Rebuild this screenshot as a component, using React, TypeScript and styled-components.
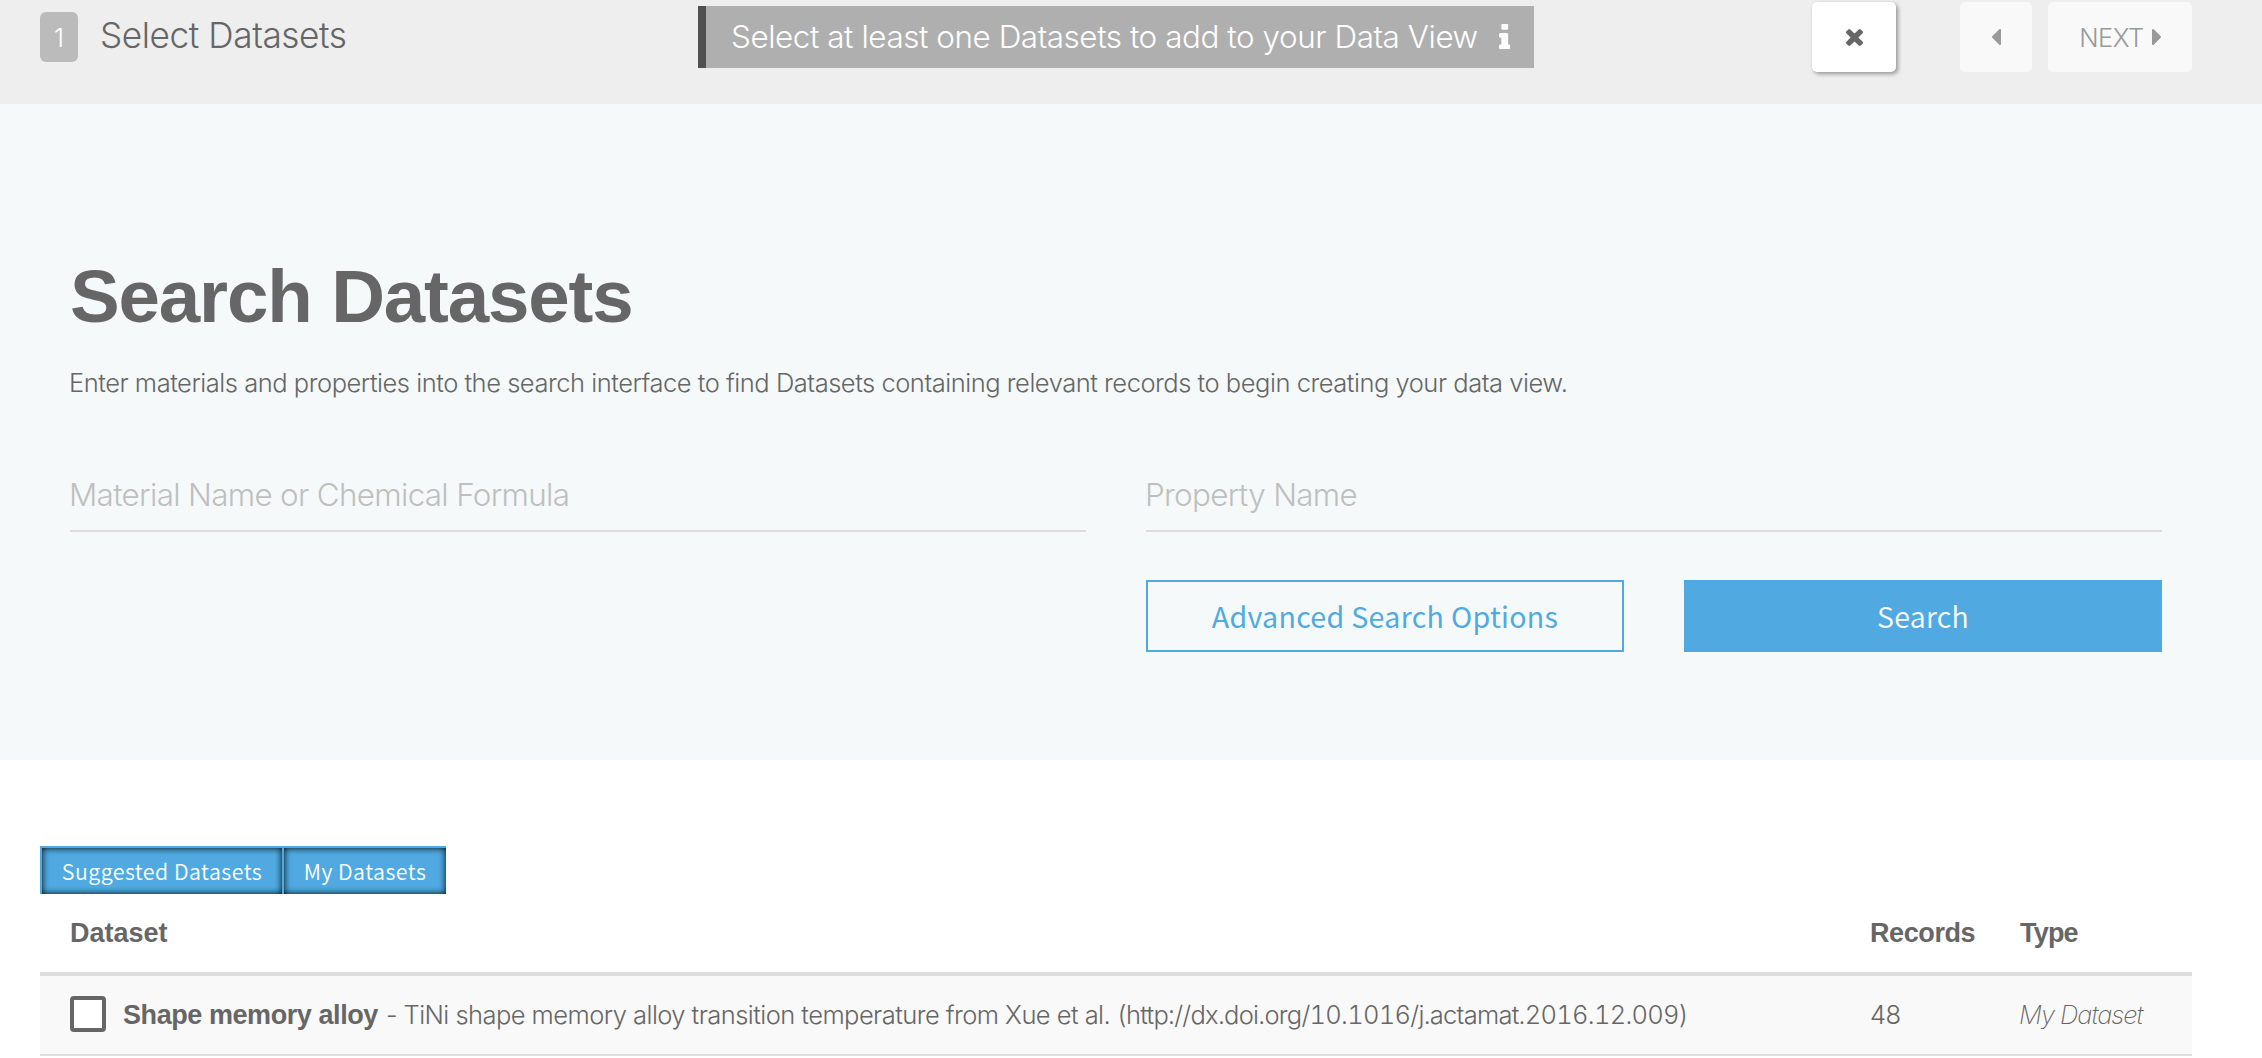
import React, { useState } from "react";
import styled, { createGlobalStyle } from "styled-components";

const light = `Inter, "Liberation Sans", sans-serif`;
const bold = `"Liberation Sans", Arial, sans-serif`;
const ui = `"Noto Sans CJK SC", "Noto Sans", sans-serif`;
const blue = "#50aae1";
const ink = "#666";
const rule = "#ddd";

const GlobalStyle = createGlobalStyle`
  *, *::before, *::after { box-sizing: border-box; }
  body {
    margin: 0;
    background: #fff;
    color: ${ink};
    font-family: ${light};
    font-weight: 300;
  }
  button, input { font: inherit; color: inherit; margin: 0; }
`;

const Page = styled.div`
  min-height: 1058px;
  background: #fff;
`;

const TopBar = styled.header`
  display: grid;
  grid-template-columns: 658px 836px 1fr;
  align-items: start;
  height: 104px;
  padding: 0 70px 0 40px;
  background: #eee;
`;

const Step = styled.div`
  display: flex;
  align-items: flex-start;
  gap: 22px;
`;

const StepNumber = styled.span`
  display: flex;
  align-items: center;
  justify-content: center;
  width: 38px;
  height: 50px;
  margin-top: 12px;
  border-radius: 6px;
  background: #bbb;
  color: #fff;
  font-size: 25.5px;
`;

const StepTitle = styled.span`
  font-size: 35.2px;
  line-height: 70px;
  letter-spacing: -0.42px;
  white-space: nowrap;
`;

const Notice = styled.div`
  display: flex;
  align-items: center;
  justify-content: space-between;
  height: 62px;
  margin-top: 6px;
  padding: 0 24px 0 25px;
  border-left: 8px solid #505050;
  background: #afafaf;
  color: #fff;
  font-size: 31.4px;
  line-height: 60px;
  letter-spacing: -0.43px;
  white-space: nowrap;

  svg {
    margin-bottom: 2px;
  }
`;

const Actions = styled.div`
  display: flex;
  justify-content: flex-end;
  gap: 16px;
  padding-top: 2px;
`;

const NavButton = styled.button<{ $width: number; $raised?: boolean }>`
  display: flex;
  align-items: center;
  justify-content: center;
  gap: 8px;
  width: ${(p) => p.$width}px;
  height: 70px;
  margin-right: ${(p) => (p.$raised ? 48 : 0)}px;
  padding: 0;
  border: 0;
  border-radius: 5px;
  background: ${(p) => (p.$raised ? "#fff" : "#f9f9f9")};
  box-shadow: ${(p) => (p.$raised ? "2px 2px 4px rgba(0, 0, 0, 0.38)" : "none")};
  color: ${(p) => (p.$raised ? ink : "#999")};
  font-size: 25.5px;
  letter-spacing: -0.5px;
`;

const Hero = styled.section`
  height: 656px;
  padding: 151px 100px 0 70px;
  background: #f5f9fa;
`;

const Heading = styled.h1`
  margin: 0 0 24px;
  font-family: ${bold};
  font-size: 74.5px;
  font-weight: 700;
  line-height: 84px;
  letter-spacing: -1.15px;
`;

const Lead = styled.p`
  margin: 0 0 56px -1px;
  font-size: 25.5px;
  line-height: 40px;
  letter-spacing: -0.474px;
  white-space: nowrap;
`;

const Form = styled.form`
  display: grid;
  grid-template-columns: 1fr 1fr;
  column-gap: 60px;
  row-gap: 48px;
`;

const Field = styled.input`
  width: 100%;
  height: 73px;
  padding: 0;
  border: 0;
  border-bottom: 2px solid ${rule};
  border-radius: 0;
  outline: 0;
  background: transparent;
  font-size: 31.4px;
  letter-spacing: -0.68px;
  text-indent: -1px;

  &::placeholder {
    color: #bfbfbf;
    opacity: 1;
  }
`;

const Buttons = styled.div`
  grid-column: 2;
  display: grid;
  grid-template-columns: 1fr 1fr;
  gap: 60px;
`;

const FormButton = styled.button<{ $solid?: boolean }>`
  height: 72px;
  padding: 0;
  border: 2px solid ${blue};
  background: ${(p) => (p.$solid ? blue : "transparent")};
  color: ${(p) => (p.$solid ? "#fff" : blue)};
  font-family: ${ui};
  font-size: 28.6px;
  font-weight: ${(p) => (p.$solid ? 350 : 400)};
  line-height: 66px;
  letter-spacing: 0.3px;
`;

const Results = styled.section`
  padding: 86px 70px 0 40px;
`;

const Tabs = styled.div`
  display: flex;
`;

const Tab = styled.button<{ $width: number }>`
  width: ${(p) => p.$width}px;
  height: 48px;
  padding: 0;
  border: 0 solid ${blue};
  border-width: 2px 0 0 2px;
  background: ${blue};
  box-shadow: inset 0 0 7px #000;
  color: #fff;
  font-family: ${ui};
  font-size: 21.4px;
  font-weight: 350;
  line-height: 46px;
  letter-spacing: 0.46px;
  white-space: nowrap;
`;

const Row = styled.div<{ $head?: boolean }>`
  display: grid;
  grid-template-columns: 1fr 150px 172px;
  align-items: center;
  height: ${(p) => (p.$head ? 82 : 80)}px;
  padding-left: 30px;
  border-bottom: ${(p) => (p.$head ? 4 : 2)}px solid ${rule};
  background: ${(p) => (p.$head ? "#fff" : "#f9f9f9")};
`;

const HeadCell = styled.div<{ $tracking?: number }>`
  font-family: ${bold};
  font-size: 27px;
  font-weight: 700;
  letter-spacing: ${(p) => p.$tracking ?? 0}px;
`;

const Cell = styled.div`
  display: flex;
  align-items: center;
  font-size: 25.5px;
  line-height: 40px;
  letter-spacing: -0.55px;
  white-space: pre;
`;

const Source = styled.span`
  font-variant-numeric: tabular-nums;
  letter-spacing: -0.73px;
`;

const Kind = styled.em`
  margin-left: -1px;
  font-weight: 200;
  letter-spacing: -1px;
`;

const Check = styled.input`
  appearance: none;
  width: 36px;
  height: 36px;
  margin: 0 17px 2px 0;
  border: 4px solid ${ink};
  border-radius: 4px;
  background: #fff;
`;

const Name = styled.strong`
  margin-right: 8px;
  font-family: ${bold};
  font-size: 27px;
  font-weight: 700;
  letter-spacing: -0.43px;
`;

const InfoIcon = () => (
  <svg width="11.5" height="25" viewBox="576 128 640 1408" fill="currentColor">
    <path d="M1216 1344v128q0 26-19 45t-45 19h-512q-26 0-45-19t-19-45v-128q0-26 19-45t45-19h64v-384h-64q-26 0-45-19t-19-45v-128q0-26 19-45t45-19h384q26 0 45 19t19 45v576h64q26 0 45 19t19 45zm-128-1152v192q0 26-19 45t-45 19h-256q-26 0-45-19t-19-45v-192q0-26 19-45t45-19h256q26 0 45 19t19 45z" />
  </svg>
);

const CloseIcon = () => (
  <svg width="17" height="17" viewBox="302 366 1188 1188" fill="currentColor">
    <path d="M1490 1322q0 40-28 68l-136 136q-28 28-68 28t-68-28l-294-294-294 294q-28 28-68 28t-68-28l-136-136q-28-28-28-68t28-68l294-294-294-294q-28-28-28-68t28-68l136-136q28-28 68-28t68 28l294 294 294-294q28-28 68-28t68 28l136 136q28 28 28 68t-28 68l-294 294 294 294q28 28 28 68z" />
  </svg>
);

const CaretLeft = () => (
  <svg width="9" height="16" viewBox="640 384 576 1024" fill="currentColor">
    <path d="M1216 448v896q0 26-19 45t-45 19-45-19l-448-448q-19-19-19-45t19-45l448-448q19-19 45-19t45 19 19 45z" />
  </svg>
);

const CaretRight = () => (
  <svg width="9" height="16" viewBox="576 384 576 1024" fill="currentColor">
    <path d="M1152 896q0 26-19 45l-448 448q-19 19-45 19t-45-19-19-45v-896q0-26 19-45t45-19 45 19l448 448q19 19 19 45z" />
  </svg>
);

const datasets = [
  {
    name: "Shape memory alloy",
    description: "TiNi shape memory alloy transition temperature from Xue et al.",
    source: "http://dx.doi.org/10.1016/j.actamat.2016.12.009",
    records: 48,
    kind: "My Dataset",
  },
];

export default function App() {
  const [selected, setSelected] = useState<string[]>([]);
  const toggle = (name: string) =>
    setSelected((s) => (s.includes(name) ? s.filter((n) => n !== name) : [...s, name]));

  return (
    <Page>
      <GlobalStyle />
      <TopBar>
        <Step>
          <StepNumber>1</StepNumber>
          <StepTitle>Select Datasets</StepTitle>
        </Step>
        <Notice>
          <span>Select at least one Datasets to add to your Data View</span>
          <InfoIcon />
        </Notice>
        <Actions>
          <NavButton $width={84} $raised aria-label="Close">
            <CloseIcon />
          </NavButton>
          <NavButton $width={72} aria-label="Previous">
            <CaretLeft />
          </NavButton>
          <NavButton $width={144}>
            NEXT
            <CaretRight />
          </NavButton>
        </Actions>
      </TopBar>

      <Hero>
        <Heading>Search Datasets</Heading>
        <Lead>
          Enter materials and properties into the search interface to find Datasets containing
          relevant records to begin creating your data view.
        </Lead>
        <Form onSubmit={(e) => e.preventDefault()}>
          <Field placeholder="Material Name or Chemical Formula" />
          <Field placeholder="Property Name" />
          <Buttons>
            <FormButton type="button">Advanced Search Options</FormButton>
            <FormButton $solid>Search</FormButton>
          </Buttons>
        </Form>
      </Hero>

      <Results>
        <Tabs>
          <Tab $width={242}>Suggested Datasets</Tab>
          <Tab $width={164}>My Datasets</Tab>
        </Tabs>
        <Row $head>
          <HeadCell>Dataset</HeadCell>
          <HeadCell $tracking={-0.4}>Records</HeadCell>
          <HeadCell $tracking={-0.8}>Type</HeadCell>
        </Row>
        {datasets.map((d) => (
          <Row key={d.name}>
            <Cell>
              <Check
                type="checkbox"
                checked={selected.includes(d.name)}
                onChange={() => toggle(d.name)}
              />
              <Name>{d.name}</Name>
              <span>{`- ${d.description} `}</span>
              <Source>{`(${d.source})`}</Source>
            </Cell>
            <Cell>{d.records}</Cell>
            <Cell>
              <Kind>{d.kind}</Kind>
            </Cell>
          </Row>
        ))}
      </Results>
    </Page>
  );
}
